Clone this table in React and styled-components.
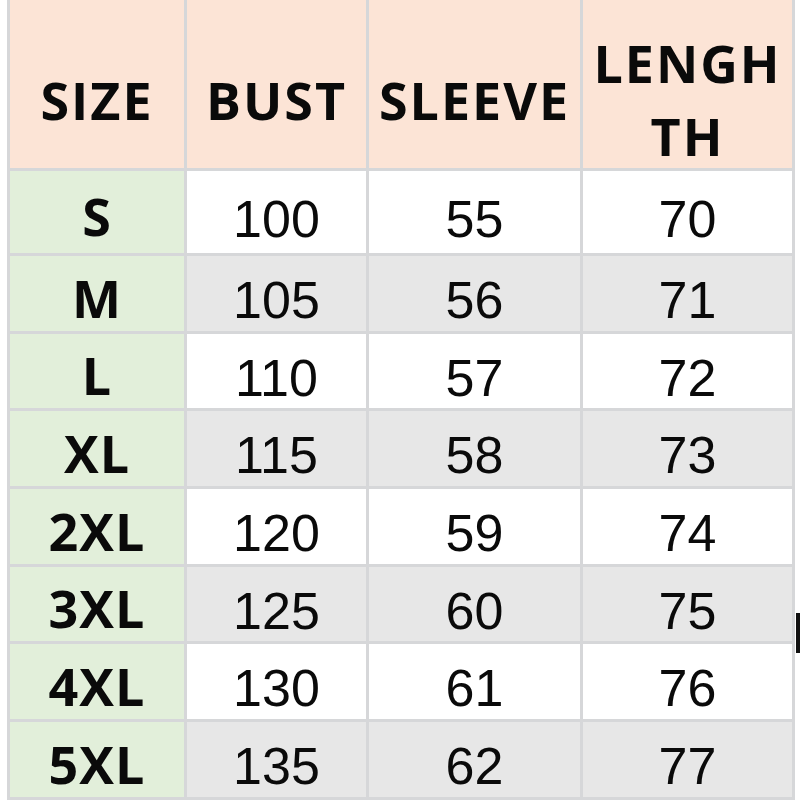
import React from "react";
import styled, { createGlobalStyle } from "styled-components";

const Global = createGlobalStyle`
  html, body { margin: 0; padding: 0; background: #ffffff; }
  body { width: 800px; height: 800px; overflow: hidden; }
`;

const Page = styled.div`
  display: flex;
  width: 800px;
  height: 800px;
  padding-left: 7px;
  box-sizing: border-box;
  background: #ffffff;
`;

const Table = styled.div`
  display: grid;
  grid-template-columns: 174px 179px 211px 209px;
  grid-template-rows: 168px 82px 75px 74px 75px 75px 74px 75px 75px;
  gap: 3px;
  padding: 0 3px 3px 3px;
  background: #d6d7d9;
  align-self: flex-start;
`;

const HeadCell = styled.div`
  background: #fce4d6;
  display: flex;
  align-items: center;
  justify-content: center;
  text-align: center;
  padding-top: 30px;
  box-sizing: border-box;
  font-family: "Open Sans", "Noto Sans", sans-serif;
  font-weight: 700;
  font-size: 52px;
  letter-spacing: 2px;
  line-height: 73px;
  color: #0a0a0a;
`;

const SizeCell = styled.div`
  background: #e2efda;
  display: flex;
  align-items: center;
  justify-content: center;
  padding-top: 8px;
  box-sizing: border-box;
  font-family: "Open Sans", "Noto Sans", sans-serif;
  font-weight: 700;
  font-size: 52px;
  line-height: 60px;
  letter-spacing: 1px;
  color: #0a0a0a;
`;

const ValueCell = styled.div`
  background: ${(p) => (p.$shade ? "#e7e7e7" : "#ffffff")};
  display: flex;
  align-items: center;
  justify-content: center;
  padding-top: 13px;
  box-sizing: border-box;
  font-family: "Liberation Sans", Arial, sans-serif;
  font-weight: 400;
  font-size: 52px;
  color: #0a0a0a;
`;

const Edge = styled.div`
  width: 5px;
  display: flex;
  flex-direction: column;
  padding-left: 1px;
`;

const EdgeMark = styled.div`
  margin-top: 613px;
  width: 4px;
  height: 40px;
  background: #111111;
`;

const rows = [
  ["S", 100, 55, 70],
  ["M", 105, 56, 71],
  ["L", 110, 57, 72],
  ["XL", 115, 58, 73],
  ["2XL", 120, 59, 74],
  ["3XL", 125, 60, 75],
  ["4XL", 130, 61, 76],
  ["5XL", 135, 62, 77],
];

export default function App() {
  return (
    <>
      <Global />
      <Page>
        <Table>
          <HeadCell>SIZE</HeadCell>
          <HeadCell>BUST</HeadCell>
          <HeadCell>SLEEVE</HeadCell>
          <HeadCell>
            LENGH
            <br />
            TH
          </HeadCell>
          {rows.map((r, i) => (
            <React.Fragment key={r[0]}>
              <SizeCell>{r[0]}</SizeCell>
              <ValueCell $shade={i % 2 === 1}>{r[1]}</ValueCell>
              <ValueCell $shade={i % 2 === 1}>{r[2]}</ValueCell>
              <ValueCell $shade={i % 2 === 1}>{r[3]}</ValueCell>
            </React.Fragment>
          ))}
        </Table>
        <Edge>
          <EdgeMark />
        </Edge>
      </Page>
    </>
  );
}
